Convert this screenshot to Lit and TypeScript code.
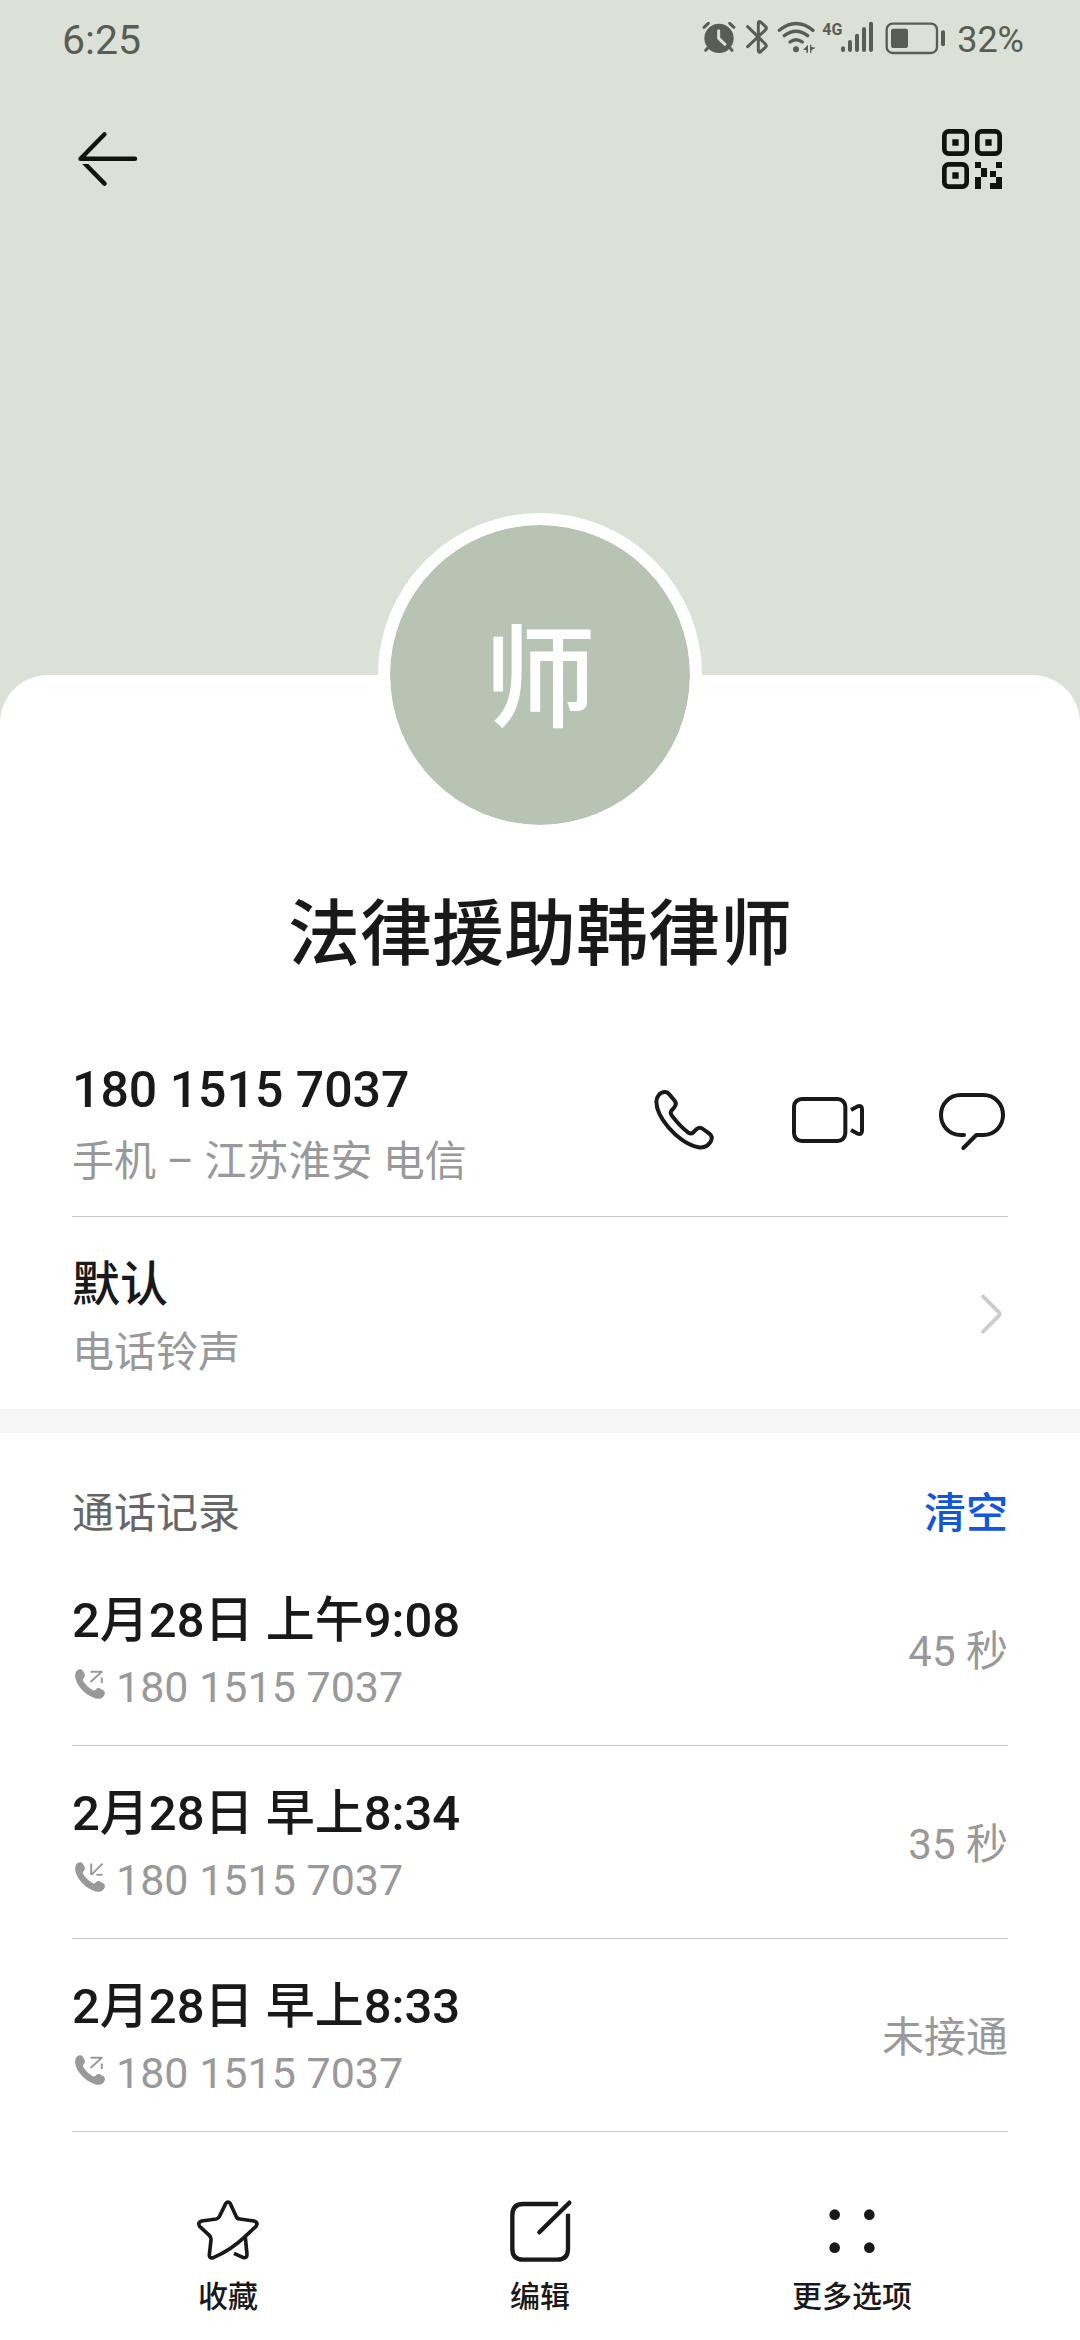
import { LitElement, html, css, svg } from "lit";
import { customElement, property } from "lit/decorators.js";

type Direction = "outgoing" | "incoming";

interface CallRecord {
  time: string;
  number: string;
  direction: Direction;
  result: string;
}

const PHONE_NUMBER = "180 1515 7037";

const RECORDS: CallRecord[] = [
  { time: "2月28日 上午9:08", number: PHONE_NUMBER, direction: "outgoing", result: "45 秒" },
  { time: "2月28日 早上8:34", number: PHONE_NUMBER, direction: "incoming", result: "35 秒" },
  { time: "2月28日 早上8:33", number: PHONE_NUMBER, direction: "outgoing", result: "未接通" },
];

@customElement("status-bar")
export class StatusBar extends LitElement {
  static styles = css`
    :host {
      display: flex;
      align-items: center;
      justify-content: space-between;
      height: 80px;
      padding: 0 56px 0 62px;
      color: #585e55;
    }
    .time {
      font-size: 41px;
      line-height: 48px;
    }
    .indicators {
      display: flex;
      align-items: center;
      gap: 8px;
    }
    .battery-level {
      padding-left: 2px;
      font-size: 36px;
      line-height: 40px;
    }
    svg {
      display: block;
      height: 40px;
      overflow: visible;
      fill: none;
      stroke: currentColor;
    }
    .alarm {
      width: 36px;
    }
    .bluetooth {
      width: 23px;
    }
    .wifi {
      width: 39px;
    }
    .signal {
      width: 54px;
    }
    .battery {
      width: 62px;
    }
    .solid {
      fill: currentColor;
      stroke: none;
    }
    .network {
      fill: currentColor;
      stroke: none;
      font-family: Roboto, sans-serif;
      font-size: 48px;
      font-weight: 700;
    }
  `;

  render() {
    return html`
      <span class="time">6:25</span>
      <div class="indicators">
        <svg class="alarm" viewBox="60 60 108 120" aria-hidden="true">
          <circle class="solid" cx="114" cy="115" r="44" />
          <path d="M69 82 L82 70 M146 70 L159 82" stroke-width="9" stroke-linecap="round" />
          <path d="M84 140 L74 151 M144 140 L153 151" stroke-width="9" stroke-linecap="round" />
          <path d="M113 92 V115 L132 133" stroke="#dbe1d7" stroke-width="9" stroke-linecap="round" />
        </svg>
        <svg class="bluetooth" viewBox="192 60 69 120" aria-hidden="true">
          <path
            d="M200 80 L254 133 Q258 138 253 142 L239 155 Q232 160 232 150 V70 Q232 61 239 66 L254 80 Q258 84 254 89 L200 140"
            stroke-width="9" stroke-linecap="round" stroke-linejoin="round" />
        </svg>
        <svg class="wifi" viewBox="285 60 117 120" aria-hidden="true">
          <path d="M295 91 Q345 50 396 91" stroke-width="10" stroke-linecap="round" />
          <path d="M310 107 Q345 80 380 107" stroke-width="10" stroke-linecap="round" />
          <path d="M327 126 Q345 112 364 126" stroke-width="10" stroke-linecap="round" />
          <circle class="solid" cx="345" cy="148" r="9" />
          <path class="solid" d="M381 134 V158 H376 V150 H366 Z M387 134 H391 V141 L404 143 L391 151 V158 H387 Z" />
        </svg>
        <svg class="signal" viewBox="426 60 162 120" aria-hidden="true">
          <text class="network" x="424" y="106">4G</text>
          <path
            d="M486 145 V150 M507 126 V150 M528 107 V150 M549 87 V150 M570 71 V150"
            stroke-width="12" stroke-linecap="round" />
        </svg>
        <svg class="battery" viewBox="612 60 186 120" aria-hidden="true">
          <rect x="617" y="71" width="151" height="88" rx="18" stroke-width="7" />
          <rect class="solid" x="630" y="86" width="51" height="58" rx="6" />
          <rect class="solid" x="780" y="91" width="12" height="48" rx="6" />
        </svg>
        <span class="battery-level">32%</span>
      </div>
    `;
  }
}

@customElement("call-record")
export class CallRecordRow extends LitElement {
  @property({ attribute: false }) record!: CallRecord;

  static styles = css`
    :host {
      display: flex;
      align-items: center;
      justify-content: space-between;
      padding: 24px 0 26px;
      border-bottom: 1px solid #c8c8c8;
    }
    .details {
      padding-top: 10px;
    }
    .time {
      font-size: 49px;
      font-weight: 500;
      line-height: 68px;
      color: #191919;
    }
    .number {
      display: flex;
      align-items: center;
      gap: 8px;
      font-size: 43px;
      line-height: 64px;
      color: #999;
    }
    .result {
      padding-top: 8px;
      font-size: 42px;
      line-height: 68px;
      color: #999;
    }
    svg {
      width: 36px;
      height: 36px;
    }
    .arrow {
      fill: none;
      stroke: currentColor;
      stroke-width: 2;
    }
  `;

  render() {
    const { time, number, direction, result } = this.record;
    const arrow =
      direction === "outgoing"
        ? svg`<path class="arrow" d="M15.5 2.8 H27.5 M15.5 13 L26.6 3 M26.8 8.4 V14" />`
        : svg`<path class="arrow" d="M16.2 1.5 V13 M16.6 12.6 L27.5 1.6 M21.5 12.8 H27.5" />`;
    return html`
      <div class="details">
        <div class="time">${time}</div>
        <div class="number">
          <svg viewBox="-3 0 36 36" aria-hidden="true">
            <path
              fill="currentColor"
              d="M2 1.6 C4 -.4 6.8 -.3 8 2 L9.6 5 C10.3 6.6 9.8 8.2 8.6 9.2 C7.6 10 7.6 11 8.2 12 C10.5 16 14 19 18 21.2 C19 21.6 20 21.6 20.6 20.8 L21 20.2 C22 19 23.6 18.8 25 19.4 L28.6 21.6 C30.2 22.8 30.2 24.6 29.2 26.4 C27.4 29.6 24 30.4 20.5 29.4 C10 26 1.5 17 .2 8 C-.1 5.5 .5 3.2 2 1.6 Z" />
            ${arrow}
          </svg>
          <span>${number}</span>
        </div>
      </div>
      <span class="result">${result}</span>
    `;
  }
}

@customElement("app-root")
export class AppRoot extends LitElement {
  static styles = css`
    :host {
      display: flex;
      flex-direction: column;
      min-height: 100vh;
      background: #dbe1d7;
      color: #191919;
      font-family: Roboto, "Noto Sans CJK SC", sans-serif;
      font-weight: 400;
    }
    button {
      margin: 0;
      padding: 0;
      border: 0;
      background: none;
      color: inherit;
      font: inherit;
      text-align: inherit;
    }
    svg {
      display: block;
      fill: none;
      stroke: currentColor;
    }
    .icon {
      width: 72px;
      height: 72px;
    }
    .solid {
      fill: currentColor;
      stroke: none;
    }
    .app-bar {
      display: flex;
      align-items: center;
      justify-content: space-between;
      height: 158px;
      padding: 0 72px;
      margin-bottom: 437px;
      color: #10140e;
    }
    .card {
      display: flex;
      flex-direction: column;
      flex: 1;
      background: #fff;
      border-radius: 48px 48px 0 0;
    }
    .avatar {
      display: flex;
      align-items: center;
      justify-content: center;
      align-self: center;
      box-sizing: border-box;
      width: 324px;
      height: 324px;
      margin-top: -162px;
      padding-top: 12px;
      border: 12px solid #fff;
      border-radius: 50%;
      background: #b7c3b3;
      background-clip: padding-box;
      color: #fff;
      font-size: 112px;
      font-weight: 500;
      line-height: 156px;
    }
    .name {
      margin: 46px 72px 37px;
      font-size: 72px;
      font-weight: 500;
      line-height: 104px;
      text-align: center;
    }
    .phone {
      display: flex;
      align-items: flex-start;
      justify-content: space-between;
      margin: 0 72px;
      padding: 30px 0 18px;
      border-bottom: 1px solid #c8c8c8;
    }
    .phone-text {
      line-height: 72px;
    }
    .phone-number {
      font-size: 50px;
      font-weight: 500;
    }
    .caption {
      font-size: 42px;
      color: #999;
    }
    .actions {
      display: flex;
      gap: 72px;
      padding-top: 30px;
    }
    .ringtone {
      display: flex;
      align-items: center;
      justify-content: space-between;
      padding: 24px 72px 22px;
      line-height: 68px;
    }
    .ringtone-text {
      display: flex;
      flex-direction: column;
      padding-top: 10px;
    }
    .ringtone-name {
      font-size: 48px;
      font-weight: 500;
    }
    .chevron {
      width: 27px;
      height: 48px;
      color: #ccc;
    }
    .band {
      height: 24px;
      background: #f6f6f6;
    }
    .log-header {
      display: flex;
      align-items: center;
      justify-content: space-between;
      padding: 50px 72px 8px;
      font-size: 42px;
      line-height: 62px;
    }
    .log-title {
      margin: 0;
      font-size: inherit;
      font-weight: 400;
      color: #666;
    }
    .log-header .clear {
      font-weight: 500;
      color: #1256dd;
    }
    .log {
      padding: 0 72px;
    }
    .toolbar {
      display: grid;
      grid-template-columns: repeat(3, 1fr);
      padding: 63px 72px 20px;
    }
    .tool {
      display: flex;
      flex-direction: column;
      align-items: center;
      gap: 8px;
      font-size: 30px;
      font-weight: 500;
      line-height: 44px;
    }
  `;

  render() {
    return html`
      <status-bar></status-bar>
      <header class="app-bar">
        <button aria-label="返回">
          <svg class="icon" viewBox="0 0 72 72" stroke-width="4.4" stroke-linecap="round" stroke-linejoin="round">
            <clipPath id="below"><rect x="0" y="41" width="72" height="31" /></clipPath>
            <path d="M63 35.8 H8.5 L32.5 11.3" />
            <path d="M8.5 36.2 L32.5 60.6" clip-path="url(#below)" />
          </svg>
        </button>
        <button aria-label="二维码">
          <svg class="icon" viewBox="108 69 216 216" stroke-width="14">
            <rect x="133" y="94" width="67" height="67" rx="13" />
            <rect x="232" y="94" width="67" height="67" rx="13" />
            <rect x="133" y="193" width="67" height="67" rx="13" />
            <path
              class="solid"
              d="M157 118h19v19h-19z M256 118h19v19h-19z M157 217h19v19h-19z M225 186h18v18h18v27h-18v36h-18v-36h18v-27h-18z M288 186h18v18h-18z M270 213h18v18h18v36h-36v-18h18v-18h-18z" />
          </svg>
        </button>
      </header>
      <main class="card">
        <div class="avatar">师</div>
        <h1 class="name">法律援助韩律师</h1>
        <section class="phone">
          <div class="phone-text">
            <div class="phone-number">${PHONE_NUMBER}</div>
            <div class="caption">手机 – 江苏淮安 电信</div>
          </div>
          <div class="actions">
            <button aria-label="拨打电话">
              <svg class="icon" viewBox="84 102 216 216" stroke-width="12" stroke-linejoin="round">
                <path
                  d="M109 155 C109 140 120 126 135 126 C141 126 145 129 149 134 L164 152 C169 159 168 166 163 172 L155 181 C151 186 152 192 155 196 C170 216 187 234 205 248 C212 252 218 250 222 245 L230 237 C236 232 244 233 249 237 L268 251 C276 257 277 266 272 275 C264 288 250 294 236 292 C205 286 170 262 145 232 C122 204 109 175 109 155 Z" />
              </svg>
            </button>
            <button aria-label="视频通话">
              <svg class="icon" viewBox="516 102 216 216" stroke-width="12">
                <rect x="522" y="147" width="154" height="126" rx="23" />
                <path d="M693 180 L713 169 Q726 165 726 178 V242 Q726 255 713 251 L693 240" />
              </svg>
            </button>
            <button aria-label="发送信息">
              <svg class="icon" viewBox="948 102 216 216" stroke-width="12" stroke-linecap="round" stroke-linejoin="round">
                <path
                  d="M1032 255 H1022 C988 255 963 228 963 195 C963 162 988 135 1022 135 H1090 C1124 135 1149 162 1149 195 C1149 228 1124 255 1090 255 H1069 L1030 294" />
              </svg>
            </button>
          </div>
        </section>
        <button class="ringtone">
          <span class="ringtone-text">
            <span class="ringtone-name">默认</span>
            <span class="caption">电话铃声</span>
          </span>
          <svg class="chevron" viewBox="1083 717 81 144" stroke-width="11" stroke-linecap="round" aria-hidden="true">
            <path d="M1089 736 L1137 784 Q1141 789 1137 794 L1089 842" />
          </svg>
        </button>
        <div class="band"></div>
        <div class="log-header">
          <h2 class="log-title">通话记录</h2>
          <button class="clear">清空</button>
        </div>
        <section class="log">
          ${RECORDS.map((record) => html`<call-record .record=${record}></call-record>`)}
        </section>
        <nav class="toolbar">
          <button class="tool">
            <svg class="icon" viewBox="96 105 216 216" stroke-width="11" stroke-linejoin="round" aria-hidden="true">
              <path
                d="M197 131 Q204 121 211 131 L228 168 Q231 176 239 177 L282 183 Q296 187 288 199 L255 230 C228 256 195 278 160 293 Q147 296 148 284 L153 240 Q154 232 148 226 L119 199 Q112 187 125 183 L169 177 Q175 176 179 168 Z" />
              <path d="M256 232 L261 283 Q261 295 250 293 L222 280" />
            </svg>
            收藏
          </button>
          <button class="tool">
            <svg class="icon" viewBox="1032 105 216 216" stroke-width="13" aria-hidden="true">
              <path d="M1194 132 H1090 Q1057 132 1057 165 V266 Q1057 299 1090 299 H1191 Q1224 299 1224 266 V161" />
              <path d="M1138 217 L1228 128" stroke-linecap="round" />
            </svg>
            编辑
          </button>
          <button class="tool">
            <svg class="icon" viewBox="228 105 216 216" aria-hidden="true">
              <circle class="solid" cx="284" cy="164" r="16" />
              <circle class="solid" cx="388" cy="164" r="16" />
              <circle class="solid" cx="284" cy="263" r="16" />
              <circle class="solid" cx="388" cy="263" r="16" />
            </svg>
            更多选项
          </button>
        </nav>
      </main>
    `;
  }
}
